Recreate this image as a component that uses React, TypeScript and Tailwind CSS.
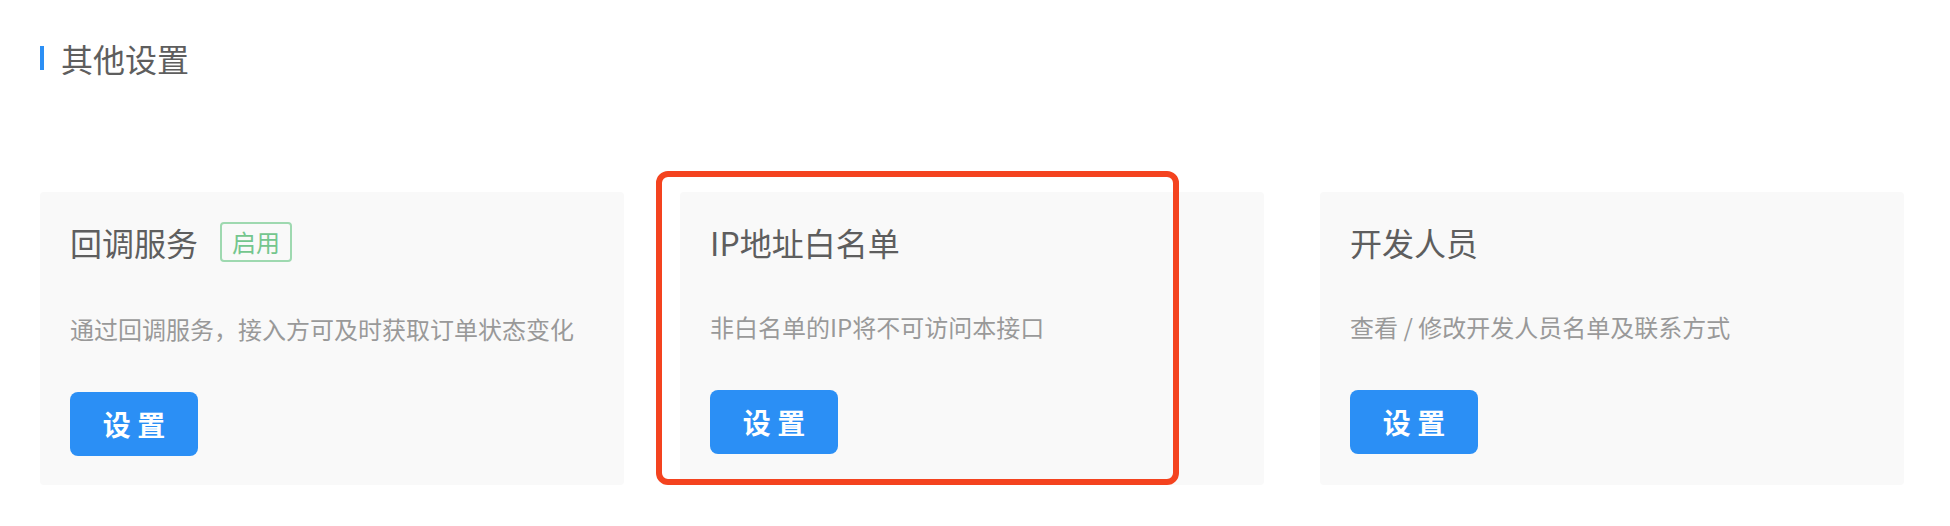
import type { ReactNode } from "react"

const font = { fontFamily: '"Noto Sans CJK SC", "Noto Sans", sans-serif' }

type Setting = {
  title: string
  desc: string
  enabled?: boolean
  highlighted?: boolean
}

const settings: Setting[] = [
  { title: "回调服务", desc: "通过回调服务，接入方可及时获取订单状态变化", enabled: true },
  { title: "IP地址白名单", desc: "非白名单的IP将不可访问本接口", highlighted: true },
  { title: "开发人员", desc: "查看 / 修改开发人员名单及联系方式" },
]

function SectionTitle({ children }: { children: ReactNode }) {
  return (
    <div className="flex h-[48px] items-center">
      <span className="mr-[17px] h-[24px] w-[4px] bg-[#2b8ff5]" />
      <h2 className="text-[32px] font-normal leading-[48px] text-[#5e5e5e]">{children}</h2>
    </div>
  )
}

function SettingCard({ setting }: { setting: Setting }) {
  return (
    <div className="relative rounded-[4px] bg-[#f9f9f9] px-[30px] pb-[29px] pt-[30px]">
      <div className={setting.enabled ? "flex h-[40px] items-center" : "flex h-[38px] items-center pt-[1px]"}>
        <span className="text-[32px] font-normal leading-[38px] text-[#5e5e5e]">{setting.title}</span>
        {setting.enabled && (
          <span className="ml-[22px] flex h-[40px] items-center rounded-[4px] border-2 border-[#9ed9b0] px-[10px] text-[24px] leading-none text-[#74c68e]">
            启用
          </span>
        )}
      </div>
      <p className="mt-[49px] text-[24px] leading-[36px] text-[#999999]">{setting.desc}</p>
      <button className="mt-[45px] flex h-[64px] w-[128px] items-center justify-center rounded-[8px] bg-[#2b8ff5] text-[28px] font-bold text-white">
        设 置
      </button>
      {setting.highlighted && (
        <div className="pointer-events-none absolute -left-[24px] -top-[21px] bottom-0 w-[523px] rounded-[12px] border-[6px] border-[#f4431f]" />
      )}
    </div>
  )
}

export default function App() {
  return (
    <div className="min-h-[526px] w-[1950px] bg-white pl-[40px] pr-[46px] pt-[34px]" style={font}>
      <SectionTitle>其他设置</SectionTitle>
      <div className="mt-[110px] grid grid-cols-3 gap-[56px]">
        {settings.map((setting) => (
          <SettingCard key={setting.title} setting={setting} />
        ))}
      </div>
    </div>
  )
}
